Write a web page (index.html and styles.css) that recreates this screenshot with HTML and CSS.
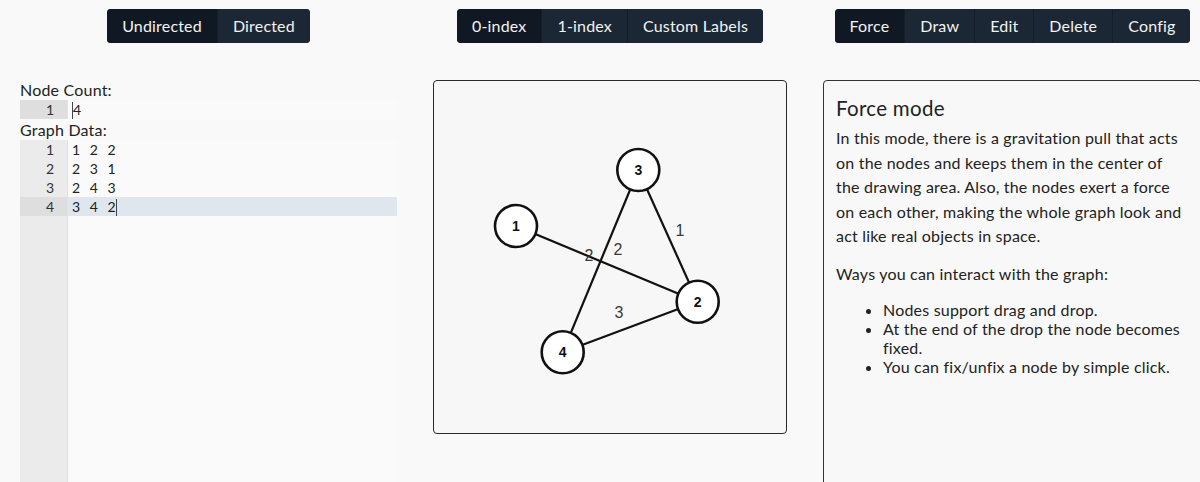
FILE: index.html
```html
<!DOCTYPE html>
<html lang="en">
<head>
<meta charset="utf-8">
<title>Graph Editor</title>
<link rel="stylesheet" href="styles.css">
</head>
<body>
<div class="page">
  <header class="toolbar">
    <div class="cell cell-left">
      <div class="btn-group">
        <button class="btn active">Undirected</button>
        <button class="btn">Directed</button>
      </div>
    </div>
    <div class="cell cell-mid">
      <div class="btn-group">
        <button class="btn active">0-index</button>
        <button class="btn">1-index</button>
        <button class="btn">Custom Labels</button>
      </div>
    </div>
    <div class="cell cell-right">
      <div class="btn-group">
        <button class="btn active">Force</button>
        <button class="btn">Draw</button>
        <button class="btn">Edit</button>
        <button class="btn">Delete</button>
        <button class="btn">Config</button>
      </div>
    </div>
  </header>

  <main class="columns">
    <section class="col-left">
      <div class="label label-first">Node Count:</div>
      <div class="editor">
        <div class="gutter">
          <div class="ln active-ln">1</div>
        </div>
        <div class="code">
          <div class="code-line"><span class="cursor"></span>4</div>
        </div>
      </div>
      <div class="label label-second">Graph Data:</div>
      <div class="editor editor-tall">
        <div class="gutter">
          <div class="ln">1</div>
          <div class="ln">2</div>
          <div class="ln">3</div>
          <div class="ln active-ln">4</div>
        </div>
        <div class="code">
          <div class="code-line">1 2 2</div>
          <div class="code-line">2 3 1</div>
          <div class="code-line">2 4 3</div>
          <div class="code-line active-line">3 4 2<span class="cursor"></span></div>
        </div>
      </div>
    </section>

    <section class="col-mid">
      <div class="graph-box">
        <svg class="graph" width="352" height="352" viewBox="0 0 352 352">
          <g class="edges">
            <line x1="82" y1="145" x2="263.7" y2="220.7"/>
            <line x1="263.7" y1="220.7" x2="204.3" y2="89"/>
            <line x1="263.7" y1="220.7" x2="128.7" y2="271.3"/>
            <line x1="204.3" y1="89" x2="128.7" y2="271.3"/>
          </g>
          <g class="edge-labels">
            <text x="155" y="174">2</text>
            <text x="246" y="149">1</text>
            <text x="185" y="231">3</text>
            <text x="184" y="168">2</text>
          </g>
          <g class="nodes">
            <circle cx="82" cy="145" r="21"/>
            <circle cx="263.7" cy="220.7" r="21"/>
            <circle cx="204.3" cy="89" r="21"/>
            <circle cx="128.7" cy="271.3" r="21"/>
          </g>
          <g class="node-labels">
            <text x="82" y="145">1</text>
            <text x="263.7" y="220.7">2</text>
            <text x="204.3" y="89">3</text>
            <text x="128.7" y="271.3">4</text>
          </g>
        </svg>
      </div>
    </section>

    <section class="col-right">
      <div class="panel">
        <h2 class="panel-title">Force mode</h2>
        <p class="panel-text">In this mode, there is a gravitation pull that acts on the nodes and keeps them in the center of the drawing area. Also, the nodes exert a force on each other, making the whole graph look and act like real objects in space.</p>
        <p class="panel-text">Ways you can interact with the graph:</p>
        <ul class="panel-list">
          <li>Nodes support drag and drop.</li>
          <li>At the end of the drop the node becomes fixed.</li>
          <li>You can fix/unfix a node by simple click.</li>
        </ul>
      </div>
    </section>
  </main>
</div>
</body>
</html>
```

FILE: styles.css
```css
html, body {
  margin: 0;
  padding: 0;
  height: 100%;
  overflow: hidden;
  background: #f9f9f9;
  font-family: Lato, "Noto Sans", sans-serif;
  color: #222;
}

.page {
  width: 1202px;
}

/* ---------- toolbar ---------- */
.toolbar {
  display: flex;
  gap: 36px;
  padding: 9px 0 0 20px;
}

.cell {
  display: flex;
  justify-content: center;
}

.cell-left { width: 377px; }
.cell-mid { width: 354px; }
.cell-right { width: 379px; }

.btn-group {
  display: flex;
  height: 34px;
  border-radius: 4px;
  overflow: hidden;
  background: #1c2735;
}

.btn {
  border: 0;
  margin: 0;
  padding: 0 15px;
  height: 34px;
  background: #1c2735;
  color: #f2f2f2;
  font-family: Lato, "Noto Sans", sans-serif;
  font-size: 16px;
  letter-spacing: 0.18px;
  line-height: 34px;
  border-left: 1px solid #141d28;
}

.btn:first-child {
  border-left: 0;
}

.btn.active {
  background: #101823;
}

/* ---------- columns ---------- */
.columns {
  display: flex;
  gap: 36px;
  padding-left: 20px;
  margin-top: 37px;
}

.col-left { width: 377px; }
.col-mid { width: 354px; }
.col-right { width: 379px; }

.label {
  font-size: 16px;
  letter-spacing: 0.2px;
  color: #222;
}

.label-first { line-height: 20px; }
.label-second { line-height: 21px; }

.editor {
  display: flex;
  font-family: Lato, "Noto Sans", sans-serif;
  font-size: 14px;
  line-height: 19px;
  color: #222;
}

.editor-tall {
  height: 360px;
}

.gutter {
  width: 47px;
  background: #ebebeb;
  border-right: 1px solid #e2e2e2;
}

.ln {
  height: 19px;
  text-align: right;
  padding-right: 13px;
  color: #333;
}

.active-ln {
  background: #dedede;
}

.code {
  flex: 1;
  background: #fafafa;
}

.code-line {
  height: 19px;
  padding-left: 4px;
  white-space: pre;
  word-spacing: 6px;
}

.active-line {
  background: #dfe6ee;
}

.cursor {
  display: inline-block;
  width: 0;
  height: 17px;
  border-left: 1px solid #444;
  vertical-align: -4px;
}

/* ---------- graph ---------- */
.graph-box {
  width: 354px;
  height: 354px;
  box-sizing: border-box;
  border: 1px solid #2a2a2a;
  border-radius: 4px;
  background: #f7f7f7;
}

.graph {
  display: block;
}

.edges line {
  stroke: #111;
  stroke-width: 2.2;
}

.edge-labels text {
  font-family: "Liberation Sans", Arial, sans-serif;
  font-size: 16px;
  fill: #3a3a3a;
  text-anchor: middle;
  dominant-baseline: central;
}

.nodes circle {
  fill: #ffffff;
  stroke: #111;
  stroke-width: 2.6;
}

.node-labels text {
  font-family: "Liberation Sans", Arial, sans-serif;
  font-size: 14px;
  font-weight: 700;
  fill: #111;
  text-anchor: middle;
  dominant-baseline: central;
}

/* ---------- panel ---------- */
.panel {
  width: 379px;
  height: 420px;
  box-sizing: border-box;
  border: 1px solid #333;
  border-radius: 4px;
  padding: 15px 14px 0 12px;
  background: #f8f8f8;
}

.panel-title {
  margin: 0 0 6px 0;
  font-size: 20.5px;
  letter-spacing: 0.3px;
  font-weight: 400;
  line-height: 24px;
  color: #222;
}

.panel-text {
  margin: 0 0 13px 0;
  font-size: 16px;
  letter-spacing: 0.2px;
  line-height: 24.6px;
  color: #222;
}

.panel-list {
  margin: 13px 0 0 0;
  padding-left: 47px;
  font-size: 16px;
  letter-spacing: 0.2px;
  line-height: 19px;
}
```
